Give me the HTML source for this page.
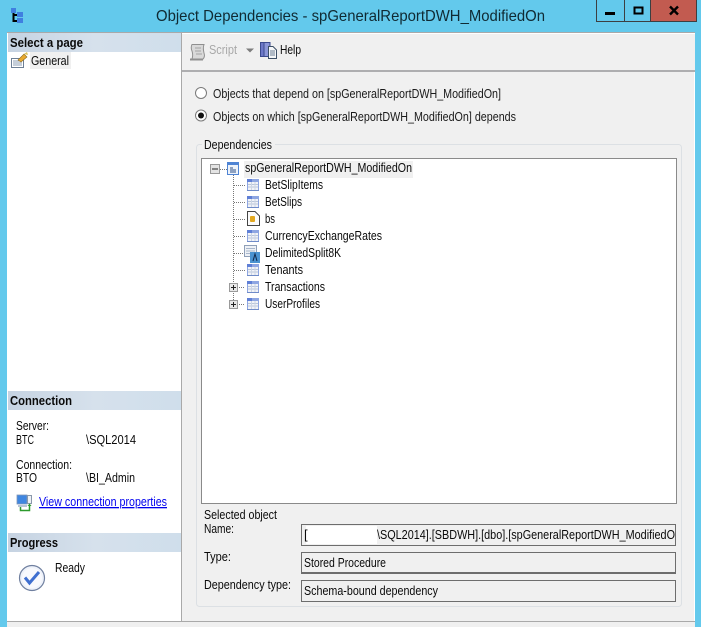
<!DOCTYPE html>
<html><head><meta charset="utf-8"><title>Object Dependencies</title>
<style>
html,body{margin:0;padding:0;width:701px;height:627px;overflow:hidden;background:#63c9ec}
svg{display:block}
text{font-family:"Liberation Sans",sans-serif;font-size:13px;fill:#0a0a0a}
.b{font-weight:bold;font-size:13px}
</style></head><body>
<svg width="701" height="627" viewBox="0 0 701 627" xmlns="http://www.w3.org/2000/svg">
<defs>
<linearGradient id="hdr" x1="0" x2="1" y1="0" y2="0"><stop offset="0" stop-color="#c6d3e2"/><stop offset=".5" stop-color="#d6e1ec"/><stop offset="1" stop-color="#cfdeeb"/></linearGradient>
<symbol id="tbl" width="12" height="12" viewBox="0 0 12 12" overflow="visible">
<rect x="0" y="0" width="12" height="12" fill="#8ea6e2"/><rect x="1" y="3" width="10" height="8" fill="#f1f3f8"/>
<path d="M1 5.500H11M1 8H11" stroke="#b9c6da"/><path d="M4.500 3V11M8 3V11" stroke="#cdd6e4"/>
<rect x="0" y="0" width="5" height="3" fill="#5f7fd6"/><rect x="0" y="11" width="12" height="1" fill="#6f8bc8"/>
</symbol>
<symbol id="plus" width="9" height="9" viewBox="0 0 9 9"><rect x=".5" y=".5" width="8" height="8" fill="#e8e8e8" stroke="#9a9a9a"/><path d="M2 4.500H7M4.500 2V7" stroke="#222"/></symbol>
</defs>

<!-- title bar -->
<rect width="701" height="627" fill="#63c9ec"/>
<g>
<rect x="11" y="8" width="5" height="5" fill="#3f7fe0"/><rect x="17" y="12" width="6" height="5" fill="#3f7fe0"/><rect x="17" y="18" width="6" height="5" fill="#3f7fe0"/>
<path d="M13.500 13V21H17M13.500 15H17" stroke="#000" stroke-width="2" fill="none"/>
</g>
<text x="156" y="21" style="font-size:16px;fill:#102a33" textLength="389" lengthAdjust="spacingAndGlyphs">Object Dependencies - spGeneralReportDWH_ModifiedOn</text>

<!-- window buttons -->
<rect x="596.500" y="-1" width="100" height="22.500" fill="#63c9ec" stroke="#3c3f41"/>
<path d="M624.500 0V21M650.500 0V21" stroke="#3c3f41"/>
<rect x="651" y="0" width="45" height="21" fill="#c25b50"/>
<rect x="605" y="12" width="10" height="3" fill="#000"/>
<rect x="634.500" y="7.500" width="8" height="6" fill="none" stroke="#000" stroke-width="2"/>
<path d="M670 6.500L678 14.500M678 6.500L670 14.500" stroke="#000" stroke-width="2.400"/>

<!-- main panels -->
<rect x="7" y="32" width="688" height="595" fill="#f0f0f0"/>
<rect x="7" y="32" width="175" height="590" fill="#fff"/>
<rect x="7" y="32" width="688" height="1" fill="#a9a9a9"/>
<rect x="181" y="32" width="1" height="590" fill="#a9a9a9"/>
<rect x="182" y="33" width="513" height="1" fill="#fff"/>
<rect x="182" y="70" width="513" height="2" fill="#aeaeb0"/>
<rect x="694" y="72" width="1" height="549" fill="#fff"/>
<rect x="7" y="621" width="688" height="1" fill="#a9a9a9"/>

<!-- left section headers -->
<rect x="8" y="33" width="173" height="19" fill="url(#hdr)"/>
<rect x="8" y="391" width="173" height="19" fill="url(#hdr)"/>
<rect x="8" y="533" width="173" height="19" fill="url(#hdr)"/>
<text class="b" x="10" y="47" textLength="73" lengthAdjust="spacingAndGlyphs">Select a page</text>
<text class="b" x="10" y="405" textLength="62" lengthAdjust="spacingAndGlyphs">Connection</text>
<text class="b" x="10" y="547" textLength="48" lengthAdjust="spacingAndGlyphs">Progress</text>

<!-- General -->
<rect x="30" y="52" width="41" height="17" fill="#f0f0f0"/>
<text x="31" y="65" textLength="38" lengthAdjust="spacingAndGlyphs">General</text>
<rect x="11.500" y="58.500" width="12" height="9" fill="#fff" stroke="#6d7f95"/>
<path d="M13 61H22M13 63H22M13 65H22" stroke="#8b9cb3"/>
<path d="M18 60L24 54L27 57L21 62Z" fill="#e8a92f" stroke="#8c6a1e" stroke-width=".6"/>
<path d="M24 54L27 52L28 55Z" fill="#d9c25a"/>

<!-- Connection -->
<text x="16" y="430" textLength="33" lengthAdjust="spacingAndGlyphs">Server:</text>
<text x="16" y="444" textLength="18" lengthAdjust="spacingAndGlyphs">BTC</text>
<text x="86" y="444" textLength="50" lengthAdjust="spacingAndGlyphs">\SQL2014</text>
<text x="16" y="469" textLength="56" lengthAdjust="spacingAndGlyphs">Connection:</text>
<text x="16" y="482" textLength="21" lengthAdjust="spacingAndGlyphs">BTO</text>
<text x="86" y="482" textLength="49" lengthAdjust="spacingAndGlyphs">\BI_Admin</text>
<text x="39" y="506" style="fill:#0000ee;text-decoration:underline" textLength="128" lengthAdjust="spacingAndGlyphs">View connection properties</text>
<rect x="17" y="495" width="10" height="9" fill="#3f86e0" stroke="#7f97b8" stroke-width=".8"/>
<rect x="18" y="505" width="9" height="2" fill="#b8c4d4"/>
<rect x="27.500" y="495.500" width="4" height="8" fill="#eef1f5" stroke="#8a98aa"/>
<path d="M20.500 507V510.500H29.500V505" fill="none" stroke="#2d9a2d" stroke-width="1.500"/>
<path d="M27.500 506L29.500 503.500L31.500 506Z" fill="#2d9a2d"/>

<!-- Progress -->
<circle cx="32" cy="578" r="12.500" fill="#eef2fa" stroke="#6f7f9f" stroke-width="1.200"/>
<circle cx="32" cy="578" r="10" fill="#f8f9fd"/>
<path d="M25 577.500L29.500 583L39 572" fill="none" stroke="#3f6fd0" stroke-width="3"/>
<text x="55" y="572" textLength="30" lengthAdjust="spacingAndGlyphs">Ready</text>

<!-- toolbar -->
<path d="M192 44.500H204C203 47 203 49 204 53C205 56 204 58 203 59H192C193 56 193 54 192 51C191 49 191 46 192 44.500Z" fill="#d9d9d9" stroke="#8f8f8f"/>
<path d="M190 59.500H203" stroke="#8f8f8f" stroke-width="2"/>
<path d="M195 48H201M195 51H201M196 54H202" stroke="#a2a2a2"/>
<text x="209" y="54" style="fill:#a8a8a8" textLength="28" lengthAdjust="spacingAndGlyphs">Script</text>
<path d="M246 48.500H254L250 52.500Z" fill="#7d7d7d"/>
<rect x="260.500" y="42.500" width="8" height="14" fill="#6d78c8" stroke="#3b4a8e"/>
<rect x="264" y="42.500" width="6" height="14" fill="#8b96d8" stroke="#3b4a8e"/>
<path d="M268.500 46.500H273L276.500 50V58.500H268.500Z" fill="#f4f6f8" stroke="#3c4f66"/>
<path d="M270 51H275M270 53H275M270 55H275" stroke="#6d7f95"/>
<text x="280" y="54" textLength="21" lengthAdjust="spacingAndGlyphs">Help</text>

<!-- radios -->
<circle cx="201" cy="93" r="5.500" fill="#fff" stroke="#7a7a7a"/>
<circle cx="201" cy="115.500" r="5.500" fill="#fff" stroke="#7a7a7a"/>
<circle cx="201" cy="115.500" r="3" fill="#111"/>
<text x="213" y="98" style="fill:#1a1a1a" textLength="288" lengthAdjust="spacingAndGlyphs">Objects that depend on [spGeneralReportDWH_ModifiedOn]</text>
<text x="213" y="121" style="fill:#1a1a1a" textLength="303" lengthAdjust="spacingAndGlyphs">Objects on which [spGeneralReportDWH_ModifiedOn] depends</text>

<!-- group box -->
<rect x="196.500" y="144.500" width="485" height="462" rx="3" fill="none" stroke="#dce0e4"/>
<rect x="202" y="139" width="73" height="12" fill="#f0f0f0"/>
<text x="204" y="149" textLength="68" lengthAdjust="spacingAndGlyphs">Dependencies</text>

<!-- tree -->
<rect x="201.500" y="158.500" width="475" height="345" fill="#fff" stroke="#8a8a8a"/>
<path d="M220 169.500H227M233.500 175V305M234 185.500H245M234 202.500H245M234 219.500H245M234 236.500H245M234 253.500H245M234 270.500H245M239 287.500H245M239 304.500H245" stroke="#777" stroke-dasharray="1 1" fill="none"/>
<rect x="210.500" y="164.500" width="9" height="9" fill="#e4e4e4" stroke="#999"/>
<path d="M212 169H218" stroke="#222"/>
<rect x="227.500" y="162.500" width="11" height="12" fill="#eef3fa" stroke="#4f84d4"/>
<rect x="227" y="162" width="12" height="3" fill="#4f84d4"/>
<path d="M230 168H233M230 170H236M230 172H236" stroke="#2c4f86"/>
<rect x="244" y="161" width="169" height="17" fill="#f0f0f0"/>
<text x="245" y="172" textLength="167" lengthAdjust="spacingAndGlyphs">spGeneralReportDWH_ModifiedOn</text>

<use href="#tbl" x="247" y="179"/>
<text x="265" y="189" textLength="58" lengthAdjust="spacingAndGlyphs">BetSlipItems</text>
<use href="#tbl" x="247" y="196"/>
<text x="265" y="206" textLength="37" lengthAdjust="spacingAndGlyphs">BetSlips</text>
<path d="M247.500 211.500H255L259.500 216V225.500H247.500Z" fill="#fbfbfb" stroke="#444"/>
<rect x="250" y="216" width="5" height="6" rx="1" fill="#e3a81f"/>
<text x="265" y="223" textLength="10" lengthAdjust="spacingAndGlyphs">bs</text>
<use href="#tbl" x="247" y="230"/>
<text x="265" y="240" textLength="117" lengthAdjust="spacingAndGlyphs">CurrencyExchangeRates</text>
<rect x="244.500" y="245.500" width="12" height="11" fill="#eef1f6" stroke="#8f9fb8"/>
<path d="M246 248.500H255M246 251H255M246 253.500H255" stroke="#a8b6cb"/>
<rect x="250" y="252" width="10" height="11" fill="#4a92d0"/>
<path d="M253 261L255 254L257 261" stroke="#12284a" fill="none"/>
<text x="265" y="257" textLength="76" lengthAdjust="spacingAndGlyphs">DelimitedSplit8K</text>
<use href="#tbl" x="247" y="264"/>
<text x="265" y="274" textLength="38" lengthAdjust="spacingAndGlyphs">Tenants</text>
<use href="#plus" x="229" y="283"/>
<use href="#tbl" x="247" y="281"/>
<text x="265" y="291" textLength="60" lengthAdjust="spacingAndGlyphs">Transactions</text>
<use href="#plus" x="229" y="300"/>
<use href="#tbl" x="247" y="298"/>
<text x="265" y="308" textLength="55" lengthAdjust="spacingAndGlyphs">UserProfiles</text>

<!-- selected object -->
<text x="204" y="519" textLength="73" lengthAdjust="spacingAndGlyphs">Selected object</text>
<text x="204" y="533" textLength="30" lengthAdjust="spacingAndGlyphs">Name:</text>
<text x="204" y="561" textLength="27" lengthAdjust="spacingAndGlyphs">Type:</text>
<text x="204" y="589" textLength="87" lengthAdjust="spacingAndGlyphs">Dependency type:</text>

<rect x="301.500" y="524.500" width="374" height="21" fill="#f0f0f0" stroke="#6d6d6d"/>
<rect x="301.500" y="552.500" width="374" height="20" fill="#f0f0f0" stroke="#6d6d6d"/>
<rect x="301" y="572" width="375" height="2" fill="#6d6d6d"/>
<rect x="301.500" y="580.500" width="374" height="21" fill="#f0f0f0" stroke="#6d6d6d"/>
<rect x="306" y="526" width="71" height="18" fill="#fff"/>
<text x="304" y="539">[</text>
<text x="377" y="539" textLength="298" lengthAdjust="spacingAndGlyphs">\SQL2014].[SBDWH].[dbo].[spGeneralReportDWH_ModifiedO</text>
<text x="304" y="567" textLength="82" lengthAdjust="spacingAndGlyphs">Stored Procedure</text>
<text x="304" y="595" textLength="134" lengthAdjust="spacingAndGlyphs">Schema-bound dependency</text>
</svg>
</body></html>
